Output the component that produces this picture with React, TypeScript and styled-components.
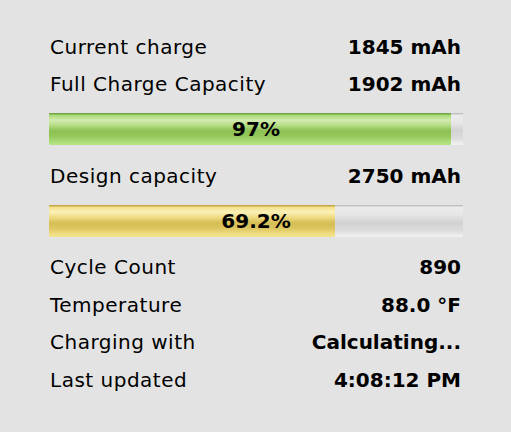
import { createGlobalStyle } from "styled-components";
import styled from "styled-components";

/* ── Styles ── */

const GlobalStyle = createGlobalStyle`
  html, body {
    margin: 0;
    padding: 0;
    background: #e3e3e3;
  }
  body {
    font-family: "DejaVu Sans", "Liberation Sans", sans-serif;
    color: #000;
  }
`;

const Panel = styled.div`
  width: 511px;
  height: 432px;
  box-sizing: border-box;
  padding: 28px 50px 0 50px;
  background: #e3e3e3;
`;

const Row = styled.div`
  display: flex;
  align-items: center;
  justify-content: space-between;
  height: 37.5px;
  font-size: 20px;
`;

const Label = styled.span`
  font-weight: 400;
  letter-spacing: 0.5px;
`;

const Value = styled.span`
  font-weight: 700;
`;

const Track = styled.div`
  position: relative;
  height: 32px;
  margin: 10px -2px 12px -1px;
  background: linear-gradient(
    to bottom,
    #c2c2c2 0px,
    #c2c2c2 1px,
    #ececec 2px,
    #e6e6e6 30%,
    #d2d2d2 55%,
    #dcdcdc 80%,
    #ededed 94%,
    #f2f2f2 100%
  );
`;

const Fill = styled.div<{ $tone: "green" | "yellow" }>`
  height: 100%;
  background: ${({ $tone }) =>
		$tone === "green"
			? `linear-gradient(
          to bottom,
          #73a544 0px,
          #73a544 1px,
          #a6d873 2px,
          #d2ecb0 22%,
          #b6de86 38%,
          #8dc153 56%,
          #94c75a 72%,
          #a9db76 88%,
          #b8e38a 100%
        )`
			: `linear-gradient(
          to bottom,
          #c2a849 0px,
          #c2a849 1px,
          #f3e08a 2px,
          #fbf1b8 22%,
          #f0dc84 38%,
          #d6be55 56%,
          #dcc45e 72%,
          #eedb7e 88%,
          #f4e48e 100%
        )`};
`;

const BarText = styled.span`
  position: absolute;
  inset: 0;
  display: flex;
  align-items: center;
  justify-content: center;
  font-size: 20px;
  font-weight: 700;
  color: #000;
`;

/* ── Component ── */

interface Bar {
	percent: number;
	label: string;
	tone: "green" | "yellow";
}

function Meter({ percent, label, tone }: Bar) {
	return (
		<Track>
			<Fill $tone={tone} style={{ width: `${percent}%` }} />
			<BarText>{label}</BarText>
		</Track>
	);
}

export default function App() {
	return (
		<>
			<GlobalStyle />
			<Panel>
				<Row>
					<Label>Current charge</Label>
					<Value>1845 mAh</Value>
				</Row>
				<Row>
					<Label>Full Charge Capacity</Label>
					<Value>1902 mAh</Value>
				</Row>
				<Meter percent={97} label="97%" tone="green" />
				<Row>
					<Label>Design capacity</Label>
					<Value>2750 mAh</Value>
				</Row>
				<Meter percent={69.2} label="69.2%" tone="yellow" />
				<Row>
					<Label>Cycle Count</Label>
					<Value>890</Value>
				</Row>
				<Row>
					<Label>Temperature</Label>
					<Value>88.0 °F</Value>
				</Row>
				<Row>
					<Label>Charging with</Label>
					<Value>Calculating...</Value>
				</Row>
				<Row>
					<Label>Last updated</Label>
					<Value>4:08:12 PM</Value>
				</Row>
			</Panel>
		</>
	);
}
